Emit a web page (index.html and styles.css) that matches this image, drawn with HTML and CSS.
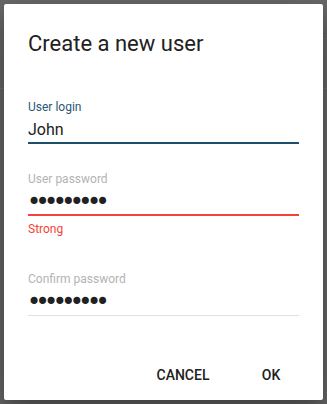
FILE: index.html
```html
<!DOCTYPE html>
<html>
<head>
<meta charset="utf-8">
<link rel="stylesheet" href="styles.css">
</head>
<body>
<div class="dialog">
  <h3 class="title">Create a new user</h3>
  <div class="content">
    <div class="field">
      <div class="label label-focus">User login</div>
      <div class="input">John</div>
      <div class="line"><div class="bar bar-focus"></div></div>
    </div>
    <div class="field">
      <div class="label">User password</div>
      <div class="input dots">•••••••••</div>
      <div class="line"><div class="bar bar-error"></div></div>
      <div class="error">Strong</div>
    </div>
    <div class="field">
      <div class="label">Confirm password</div>
      <div class="input dots">•••••••••</div>
      <div class="line"><div class="bar bar-idle"></div></div>
    </div>
  </div>
  <div class="actions">
    <button class="btn">Cancel</button>
    <button class="btn">OK</button>
  </div>
</div>
</body>
</html>
```
FILE: styles.css
```css
html, body {
  margin: 0;
  padding: 0;
}
body {
  width: 327px;
  height: 404px;
  box-sizing: border-box;
  padding: 4px;
  background: #696969;
  background-image:
    linear-gradient(to bottom, transparent 33px, #626262 33px, #626262 34px, transparent 34px),
    linear-gradient(to bottom, transparent 88px, #737373 88px, #737373 89px, transparent 89px);
  font-family: Roboto, "Noto Sans", sans-serif;
  overflow: hidden;
}
.dialog {
  width: 319px;
  height: 396px;
  background: #fff;
  border-radius: 2px;
  box-shadow: 0 14px 45px rgba(0,0,0,0.25), 0 10px 18px rgba(0,0,0,0.22);
  display: flex;
  flex-direction: column;
  box-sizing: border-box;
}
.title {
  margin: 0;
  padding: 24px 24px 0;
  font-size: 22px;
  line-height: 32px;
  font-weight: 400;
  color: #212121;
}
.content {
  padding: 39px 24px 0;
  flex: 1;
}
.field {
  margin-bottom: 27px;
}
.label {
  font-size: 12px;
  line-height: 16px;
  height: 16px;
  color: #b3b3b3;
}
.label-focus {
  color: #2a5877;
}
.input {
  margin-top: 3px;
  font-size: 16px;
  line-height: 24px;
  height: 24px;
  color: #212121;
}
.dots {
  font-family: "DejaVu Sans", sans-serif;
  font-size: 24px;
  letter-spacing: -5.6px;
  margin-left: -1px;
  color: #212121;
}
.line {
  height: 2px;
  display: flex;
  flex-direction: column;
  justify-content: flex-end;
}
.bar {
  height: 2px;
}
.bar-focus { background: #1d4e6c; }
.bar-error { background: #f44336; }
.bar-idle { height: 1px; background: #e0e0e0; }
.error {
  margin-top: 7px;
  font-size: 12px;
  line-height: 12px;
  height: 21px;
  color: #f44336;
}
.actions {
  display: flex;
  justify-content: flex-end;
  padding: 8px 8px 7px;
}
.btn {
  min-width: 88px;
  height: 36px;
  padding: 0 16px;
  border: none;
  background: transparent;
  font-family: Roboto, sans-serif;
  font-size: 14px;
  font-weight: 500;
  text-transform: uppercase;
  color: #212121;
  line-height: 36px;
}
```
